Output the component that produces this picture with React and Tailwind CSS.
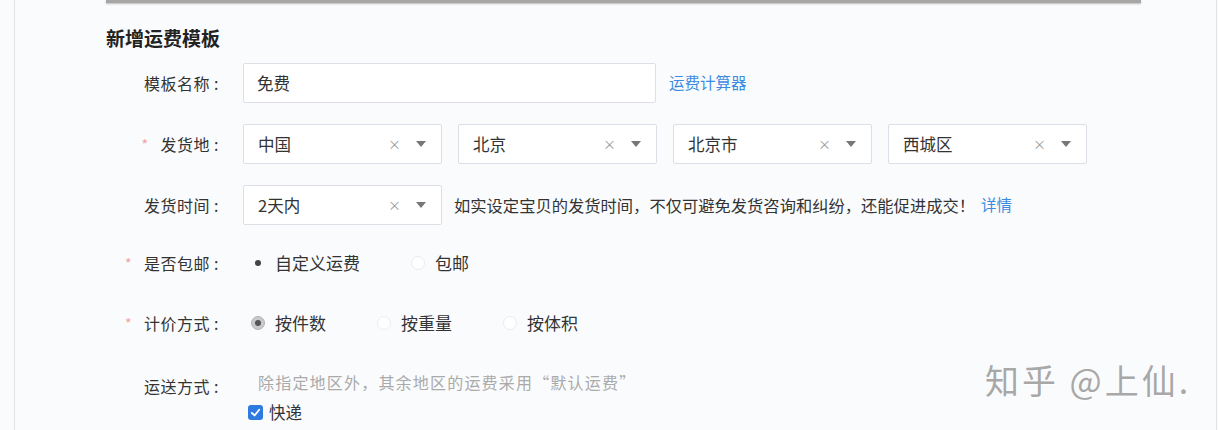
import React from "react";

const font = { fontFamily: '"Noto Sans CJK SC", "Noto Sans", sans-serif' };

function Label({ star, children }) {
  return (
    <div className="w-[114px] shrink-0 flex items-center justify-end text-[16px] tracking-[0.5px] text-[#333] leading-[22px]">
      {star && <span className="text-[#f3a0a0] mr-[12px] text-[14px]">*</span>}
      <span>{children}</span>
      <span className="ml-[4px] mr-[1px]">:</span>
    </div>
  );
}

function Caret() {
  return (
    <svg width="10" height="6" viewBox="0 0 10 6" className="ml-[15px]">
      <path d="M0 0 L10 0 L5 6 Z" fill="#777" />
    </svg>
  );
}

function Select({ value }) {
  return (
    <div className="w-[199px] h-[40px] border border-[#dcdfe6] rounded-[2px] bg-white flex items-center pl-[14px] pr-[15px]">
      <span className="flex-1 text-[16.5px] text-[#333]">{value}</span>
      <span className="text-[13px] text-[#999]">×</span>
      <Caret />
    </div>
  );
}

function Radio({ checked, dotOnly, label, gap }) {
  return (
    <div className={`flex items-center ${gap}`}>
      {dotOnly ? (
        <span className="w-[14px] h-[14px] flex items-center justify-center">
          <span className="w-[6px] h-[6px] rounded-full bg-[#444]" />
        </span>
      ) : checked ? (
        <span className="w-[14px] h-[14px] rounded-full bg-[#c9c9c9] border border-[#b5b5b5] flex items-center justify-center">
          <span className="w-[6px] h-[6px] rounded-full bg-[#555]" />
        </span>
      ) : (
        <span className="w-[14px] h-[14px] rounded-full border border-[#ececec] bg-white" />
      )}
      <span className="ml-[10px] text-[17px] text-[#333]">{label}</span>
    </div>
  );
}

export default function App() {
  return (
    <div style={font} className="relative w-[1218px] h-[430px] bg-[#fafbfd] overflow-hidden">
      <div className="ml-[14px] mr-[1px] h-full border-l border-r border-[#e2e3e6] flex flex-col">
        <div className="ml-[91px] w-[1035px] h-[3px] bg-[#a8a6a2] shadow-[0_1px_2px_rgba(0,0,0,0.25)]" />
        <div className="pl-[91px] pt-[24px] flex flex-col">
          <div className="text-[19px] font-bold text-[#222] leading-[22px]">新增运费模板</div>

          <div className="mt-[14px] h-[40px] flex items-center">
            <Label>模板名称</Label>
            <div className="ml-[23px] w-[413px] h-[40px] border border-[#dcdfe6] rounded-[2px] bg-white flex items-center pl-[13px] text-[16.5px] text-[#333]">
              免费
            </div>
            <span className="ml-[13px] text-[15.5px] text-[#3a8be0]">运费计算器</span>
          </div>

          <div className="mt-[21px] h-[40px] flex items-center">
            <Label star>发货地</Label>
            <div className="ml-[23px] flex gap-[16px]">
              <Select value="中国" />
              <Select value="北京" />
              <Select value="北京市" />
              <Select value="西城区" />
            </div>
          </div>

          <div className="mt-[21px] h-[40px] flex items-center">
            <Label>发货时间</Label>
            <div className="ml-[23px]">
              <Select value="2天内" />
            </div>
            <span className="ml-[12px] text-[16.3px] text-[#333]">
              如实设定宝贝的发货时间，不仅可避免发货咨询和纠纷，还能促进成交！
            </span>
            <span className="ml-[6px] text-[15.5px] text-[#3a8be0]">详情</span>
          </div>

          <div className="mt-[18px] h-[40px] flex items-center">
            <Label star>是否包邮</Label>
            <div className="ml-[31px] flex items-center">
              <Radio dotOnly label="自定义运费" gap="" />
              <Radio label="包邮" gap="ml-[51px]" />
            </div>
          </div>

          <div className="mt-[20px] h-[40px] flex items-center">
            <Label star>计价方式</Label>
            <div className="ml-[31px] flex items-center">
              <Radio checked label="按件数" gap="" />
              <Radio label="按重量" gap="ml-[51px]" />
              <Radio label="按体积" gap="ml-[51px]" />
            </div>
          </div>

          <div className="mt-[28px] flex items-start">
            <div className="mt-[4px]">
              <Label>运送方式</Label>
            </div>
            <div className="ml-[38px] flex flex-col">
              <span className="text-[16px] tracking-[1.2px] leading-[22px] text-[#aaa]">
                除指定地区外，其余地区的运费采用“默认运费”
              </span>
              <div className="mt-[9px] -ml-[10px] flex items-center">
                <span className="w-[15px] h-[15px] rounded-[3px] bg-[#2d7be0] flex items-center justify-center">
                  <svg width="11" height="11" viewBox="0 0 12 12">
                    <path d="M2 6.5 L5 9.2 L10 3" stroke="white" strokeWidth="2" fill="none" strokeLinecap="round" strokeLinejoin="round" />
                  </svg>
                </span>
                <span className="ml-[6px] text-[16.5px] text-[#333] leading-[20px]">快递</span>
              </div>
            </div>
          </div>
        </div>
      </div>
      <div className="absolute left-[985px] top-[358px] text-[34px] leading-[44px] text-[#a8a8a8] tracking-[3px] [text-shadow:1px_1px_1px_rgba(255,255,255,0.9)]">
        知乎 @上仙.
      </div>
    </div>
  );
}
